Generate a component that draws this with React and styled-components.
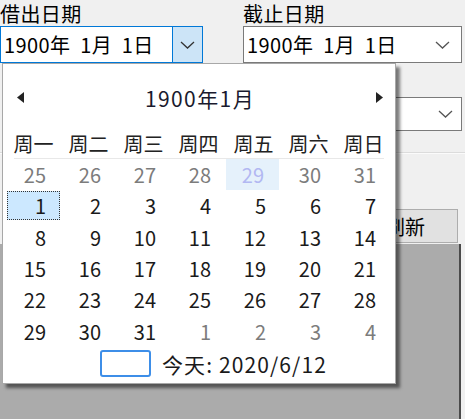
import React from 'react'
import styled, { createGlobalStyle } from 'styled-components'

const GlobalStyle = createGlobalStyle`
  html, body {
    margin: 0;
    padding: 0;
    background: #f0f0f0;
  }
  * {
    box-sizing: border-box;
  }
`

const FONT = `"Noto Sans CJK SC", "Noto Sans", sans-serif`

const Form = styled.div`
  position: relative;
  width: 465px;
  height: 419px;
  overflow: hidden;
  background: #f0f0f0;
  font-family: ${FONT};
  color: #000;
  display: flex;
  flex-direction: column;
`

const TopRow = styled.div`
  display: flex;
  gap: 40px;
  padding-top: 1px;
`

const Field = styled.div`
  display: flex;
  flex-direction: column;
  width: ${({ width }) => width}px;
`

const Label = styled.div`
  font-size: 20px;
  line-height: 25px;
  height: 25px;
  letter-spacing: 0.4px;
`

const Picker = styled.div`
  height: 37px;
  display: flex;
  align-items: center;
  background: #fff;
  border: 1px solid ${({ focused }) => (focused ? '#0078d7' : '#7a7a7a')};
`

const PickerText = styled.div`
  flex: 1;
  font-size: 20px;
  padding-left: 3px;
  white-space: pre;
  letter-spacing: 0.4px;
`

const DropButton = styled.div`
  width: 30px;
  height: 100%;
  display: flex;
  align-items: center;
  justify-content: center;
  background: ${({ active }) => (active ? '#cce4f7' : 'transparent')};
  border-left: 1px solid ${({ active }) => (active ? '#0078d7' : 'transparent')};
  margin-right: ${({ active }) => (active ? 0 : 4)}px;
`

const SecondRow = styled.div`
  display: flex;
  justify-content: flex-end;
  padding-right: 3px;
  margin-top: 34px;
`

const Combo = styled.div`
  width: 219px;
  height: 34px;
  display: flex;
  justify-content: flex-end;
  align-items: center;
  padding-right: 8px;
  background: #fff;
  border: 1px solid #7a7a7a;
`

const Separator = styled.div`
  margin-top: 21px;
  height: 2px;
  border-top: 1px solid #dcdcdc;
  border-bottom: 1px solid #fbfbfb;
`

const ButtonRow = styled.div`
  display: flex;
  justify-content: flex-end;
  padding-right: 7px;
  margin-top: 55px;
`

const Button = styled.div`
  width: 106px;
  height: 34px;
  display: flex;
  align-items: center;
  justify-content: center;
  font-size: 20px;
  background: #e1e1e1;
  border: 1px solid #adadad;
`

const GridArea = styled.div`
  flex: 1;
  width: 461px;
  margin-top: 1px;
  background: #ababab;
  border-right: 2px solid #4a4a4a;
`

const Popup = styled.div`
  position: absolute;
  left: 2px;
  top: 63px;
  width: 394px;
  height: 321px;
  background: #fff;
  border: 1px solid #a8a8a8;
  box-shadow: 4px 4px 3px rgba(0, 0, 0, 0.5);
  padding: 0 0 0 3px;
  display: flex;
  flex-direction: column;
`

const Header = styled.div`
  height: 65px;
  display: flex;
  align-items: center;
  justify-content: space-between;
  padding: 2px 12px 0 11px;
`

const Title = styled.div`
  font-size: 21px;
  letter-spacing: 1.4px;
  color: #1a1a2e;
`

const Arrow = styled.svg`
  width: 7px;
  height: 11px;
  display: block;
`

const DayNames = styled.div`
  display: grid;
  grid-template-columns: repeat(7, 55px);
  height: 29px;
  align-items: center;
`

const DayName = styled.div`
  text-align: center;
  font-size: 20px;
  color: #222;
`

const HeaderLine = styled.div`
  height: 1px;
  margin: 0 8px 0 8px;
  width: 370px;
  background: #e8e8e8;
`

const Weeks = styled.div`
  display: grid;
  grid-template-columns: repeat(7, 55px);
  grid-auto-rows: 31.3px;
`

const Cell = styled.div`
  position: relative;
  display: flex;
  align-items: center;
  justify-content: flex-end;
  padding-right: 15px;
  font-size: 20px;
  color: ${({ tone }) =>
    tone === 'muted' ? '#7c7c7c' : tone === 'hover' ? '#b2b8f2' : '#1a1a1a'};
  background: ${({ tone }) => (tone === 'hover' ? '#e5f1fb' : 'transparent')};
  margin-right: ${({ tone }) => (tone === 'hover' ? 2 : 0)}px;
  ${({ selected }) =>
    selected &&
    `
    &::before {
      content: '';
      position: absolute;
      left: 1px;
      right: 1px;
      top: 1px;
      bottom: 2px;
      background: #cce8ff;
      border: 1.5px dotted #333;
      z-index: 0;
    }
  `}
  span {
    position: relative;
    z-index: 1;
  }
`

const TodayRow = styled.div`
  display: flex;
  align-items: center;
  height: 34px;
  padding-left: 94px;
  gap: 11px;
`

const TodayBox = styled.div`
  width: 51px;
  height: 27px;
  border: 2px solid #3d8ee8;
  border-radius: 3px;
`

const TodayText = styled.div`
  font-size: 21px;
  letter-spacing: 1.1px;
  color: #1a1a1a;
`

function Chevron({ color }) {
  return (
    <svg width="15" height="8" viewBox="0 0 15 8" style={{ display: 'block' }}>
      <path d="M1 1 L7.5 7 L14 1" fill="none" stroke={color} strokeWidth="1.3" />
    </svg>
  )
}

const names = ['周一', '周二', '周三', '周四', '周五', '周六', '周日']

function buildDays() {
  const days = []
  ;[25, 26, 27, 28, 29, 30, 31].forEach((d) =>
    days.push({ d, tone: d === 29 ? 'hover' : 'muted' })
  )
  for (let d = 1; d <= 31; d++) days.push({ d, tone: 'normal', selected: d === 1 })
  ;[1, 2, 3, 4].forEach((d) => days.push({ d, tone: 'muted' }))
  return days
}

export default function App() {
  const days = buildDays()
  return (
    <>
      <GlobalStyle />
      <Form>
        <TopRow>
          <Field width={203}>
            <Label>借出日期</Label>
            <Picker focused>
              <PickerText>1900年  1月  1日</PickerText>
              <DropButton active>
                <Chevron color="#333" />
              </DropButton>
            </Picker>
          </Field>
          <Field width={219}>
            <Label>截止日期</Label>
            <Picker>
              <PickerText>1900年  1月  1日</PickerText>
              <DropButton>
                <Chevron color="#555" />
              </DropButton>
            </Picker>
          </Field>
        </TopRow>
        <SecondRow>
          <Combo>
            <Chevron color="#555" />
          </Combo>
        </SecondRow>
        <Separator />
        <ButtonRow>
          <Button>刷新</Button>
        </ButtonRow>
        <GridArea />

        <Popup>
          <Header>
            <Arrow viewBox="0 0 7 11">
              <path d="M7 0 L0 5.5 L7 11 Z" fill="#222" />
            </Arrow>
            <Title>1900年1月</Title>
            <Arrow viewBox="0 0 7 11">
              <path d="M0 0 L7 5.5 L0 11 Z" fill="#222" />
            </Arrow>
          </Header>
          <DayNames>
            {names.map((n) => (
              <DayName key={n}>{n}</DayName>
            ))}
          </DayNames>
          <HeaderLine />
          <Weeks>
            {days.map((x, i) => (
              <Cell key={i} tone={x.tone} selected={x.selected}>
                <span>{x.d}</span>
              </Cell>
            ))}
          </Weeks>
          <TodayRow>
            <TodayBox />
            <TodayText>今天: 2020/6/12</TodayText>
          </TodayRow>
        </Popup>
      </Form>
    </>
  )
}
